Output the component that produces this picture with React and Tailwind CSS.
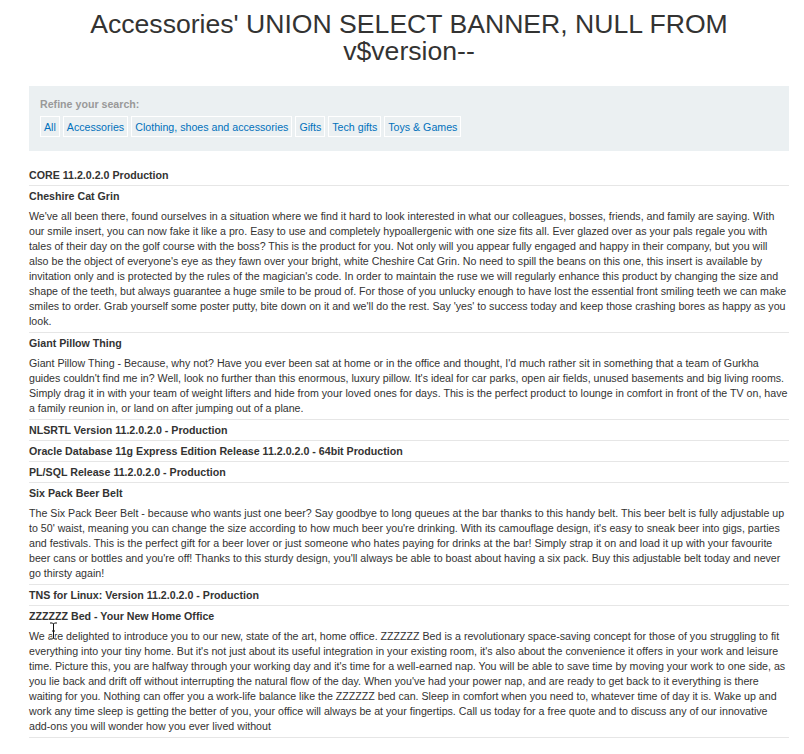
const cats = ['All', 'Accessories', 'Clothing, shoes and accessories', 'Gifts', 'Tech gifts', 'Toys & Games'];

const rows = [
  { t: 'CORE 11.2.0.2.0 Production' },
  {
    t: 'Cheshire Cat Grin',
    d: "We've all been there, found ourselves in a situation where we find it hard to look interested in what our colleagues, bosses, friends, and family are saying. With our smile insert, you can now fake it like a pro. Easy to use and completely hypoallergenic with one size fits all. Ever glazed over as your pals regale you with tales of their day on the golf course with the boss? This is the product for you. Not only will you appear fully engaged and happy in their company, but you will also be the object of everyone's eye as they fawn over your bright, white Cheshire Cat Grin. No need to spill the beans on this one, this insert is available by invitation only and is protected by the rules of the magician's code. In order to maintain the ruse we will regularly enhance this product by changing the size and shape of the teeth, but always guarantee a huge smile to be proud of. For those of you unlucky enough to have lost the essential front smiling teeth we can make smiles to order. Grab yourself some poster putty, bite down on it and we'll do the rest. Say 'yes' to success today and keep those crashing bores as happy as you look.",
  },
  {
    t: 'Giant Pillow Thing',
    d: "Giant Pillow Thing - Because, why not? Have you ever been sat at home or in the office and thought, I'd much rather sit in something that a team of Gurkha guides couldn't find me in? Well, look no further than this enormous, luxury pillow. It's ideal for car parks, open air fields, unused basements and big living rooms. Simply drag it in with your team of weight lifters and hide from your loved ones for days. This is the perfect product to lounge in comfort in front of the TV on, have a family reunion in, or land on after jumping out of a plane.",
  },
  { t: 'NLSRTL Version 11.2.0.2.0 - Production' },
  { t: 'Oracle Database 11g Express Edition Release 11.2.0.2.0 - 64bit Production' },
  { t: 'PL/SQL Release 11.2.0.2.0 - Production' },
  {
    t: 'Six Pack Beer Belt',
    d: "The Six Pack Beer Belt - because who wants just one beer? Say goodbye to long queues at the bar thanks to this handy belt. This beer belt is fully adjustable up to 50' waist, meaning you can change the size according to how much beer you're drinking. With its camouflage design, it's easy to sneak beer into gigs, parties and festivals. This is the perfect gift for a beer lover or just someone who hates paying for drinks at the bar! Simply strap it on and load it up with your favourite beer cans or bottles and you're off! Thanks to this sturdy design, you'll always be able to boast about having a six pack. Buy this adjustable belt today and never go thirsty again!",
  },
  { t: 'TNS for Linux: Version 11.2.0.2.0 - Production' },
  {
    t: 'ZZZZZZ Bed - Your New Home Office',
    d: "We are delighted to introduce you to our new, state of the art, home office. ZZZZZZ Bed is a revolutionary space-saving concept for those of you struggling to fit everything into your tiny home. But it's not just about its useful integration in your existing room, it's also about the convenience it offers in your work and leisure time. Picture this, you are halfway through your working day and it's time for a well-earned nap. You will be able to save time by moving your work to one side, as you lie back and drift off without interrupting the natural flow of the day. When you've had your power nap, and are ready to get back to it everything is there waiting for you. Nothing can offer you a work-life balance like the ZZZZZZ bed can. Sleep in comfort when you need to, whatever time of day it is. Wake up and work any time sleep is getting the better of you, your office will always be at your fingertips. Call us today for a free quote and to discuss any of our innovative add-ons you will wonder how you ever lived without",
    cursor: true,
  },
];

function Cursor() {
  return (
    <svg className="absolute left-[20px] top-[-4px]" width="9" height="18" viewBox="0 0 9 18">
      <path d="M1 1h2.5l1 1 1-1H8M4.5 2v14M1 17h2.5l1-1 1 1H8M3 9h3" fill="none" stroke="#fff" strokeWidth="2.4" />
      <path d="M1 1h2.5l1 1 1-1H8M4.5 2v14M1 17h2.5l1-1 1 1H8M3 9h3" fill="none" stroke="#111" strokeWidth="1" />
    </svg>
  );
}

export default function App() {
  return (
    <div className="min-h-[754px] bg-white pl-[29px] pr-[15px] pt-[11px] pb-[20px] font-['Liberation_Sans',Arial,sans-serif] text-[#333332]">
      <h1 className="text-center text-[26.6px] leading-[27px] font-normal text-[#333332]">
        Accessories' UNION SELECT BANNER, NULL FROM <span className="whitespace-nowrap">v$version--</span>
      </h1>
      <section className="mt-[21px] bg-[#ebf0f2] px-[11px] pt-[11px] pb-[14px]">
        <div className="text-[10.65px] leading-[14px] font-bold text-[#999999]">Refine your search:</div>
        <div className="mt-[5px] flex gap-[3px]">
          {cats.map((c) => (
            <a
              key={c}
              className="border border-white px-[3px] py-[2.5px] text-[10.65px] leading-[14px] text-[#0071bc]"
            >
              {c}
            </a>
          ))}
        </div>
      </section>
      <div className="mt-[14px] flex flex-col text-[10.65px]">
        {rows.map((r) => (
          <div key={r.t} className="border-b border-[#e6e6e6]">
            <div className="py-[2.5px] leading-[15px] font-bold">{r.t}</div>
            {r.d && (
              <div className="relative pt-[3px] pb-[3px] leading-[15px]">
                {r.cursor && <Cursor />}
                {r.d}
              </div>
            )}
          </div>
        ))}
      </div>
    </div>
  );
}
